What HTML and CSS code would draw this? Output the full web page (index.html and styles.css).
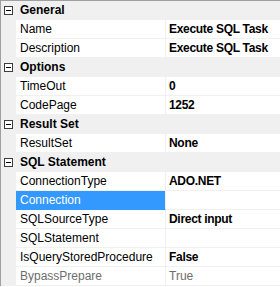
FILE: index.html
```html
<!DOCTYPE html>
<html>
<head>
<meta charset="utf-8">
<link rel="stylesheet" href="styles.css">
</head>
<body>
<div class="grid">
  <div class="cat"><span class="gut"><span class="box"></span></span><span class="catname">General</span></div>
  <div class="row"><span class="gut"></span><span class="name">Name</span><span class="val">Execute SQL Task</span></div>
  <div class="row"><span class="gut"></span><span class="name">Description</span><span class="val">Execute SQL Task</span></div>
  <div class="cat"><span class="gut"><span class="box"></span></span><span class="catname">Options</span></div>
  <div class="row"><span class="gut"></span><span class="name">TimeOut</span><span class="val">0</span></div>
  <div class="row"><span class="gut"></span><span class="name">CodePage</span><span class="val">1252</span></div>
  <div class="cat"><span class="gut"><span class="box"></span></span><span class="catname">Result Set</span></div>
  <div class="row"><span class="gut"></span><span class="name">ResultSet</span><span class="val">None</span></div>
  <div class="cat"><span class="gut"><span class="box"></span></span><span class="catname">SQL Statement</span></div>
  <div class="row"><span class="gut"></span><span class="name">ConnectionType</span><span class="val">ADO.NET</span></div>
  <div class="row sel"><span class="gut"></span><span class="name">Connection</span><span class="val"></span></div>
  <div class="row"><span class="gut"></span><span class="name">SQLSourceType</span><span class="val">Direct input</span></div>
  <div class="row"><span class="gut"></span><span class="name">SQLStatement</span><span class="val"></span></div>
  <div class="row"><span class="gut"></span><span class="name">IsQueryStoredProcedure</span><span class="val">False</span></div>
  <div class="row dis"><span class="gut"></span><span class="name">BypassPrepare</span><span class="val">True</span></div>
</div>
</body>
</html>
```
FILE: styles.css
```css
html, body { margin: 0; padding: 0; background: #fff; }
body { width: 280px; height: 287px; overflow: hidden; font-family: "Liberation Sans", Arial, sans-serif; font-size: 12px; color: #000; }
.grid { border-left: 1px solid #a0a0a0; border-top: 1px solid #a0a0a0; display: flex; flex-direction: column; }
.cat, .row { display: flex; height: 19px; align-items: stretch; }
.cat { background: #f0f0f0; }
.gut { width: 15px; flex: none; background: #f0f0f0; display: flex; align-items: center; justify-content: center; }
.box { width: 7px; height: 7px; border: 1px solid #3c3c3c; position: relative; background: #fff; }
.box::after { content: ""; position: absolute; left: 1px; top: 3px; width: 5px; height: 1px; background: #000; }
.catname { font-weight: bold; padding-left: 4px; line-height: 18px; }
.name { width: 145px; flex: none; padding-left: 4px; border-right: 1px solid #f0f0f0; border-bottom: 1px solid #f0f0f0; line-height: 18px; white-space: nowrap; overflow: hidden; }
.val { flex: 1; padding-left: 3px; font-weight: bold; letter-spacing: -0.3px; border-bottom: 1px solid #f0f0f0; line-height: 18px; white-space: nowrap; }
.sel .name { background: #3399ff; color: #fff; border-bottom-color: #3399ff; }
.dis .name, .dis .val { color: #6d6d6d; font-weight: normal; letter-spacing: 0; }
```
